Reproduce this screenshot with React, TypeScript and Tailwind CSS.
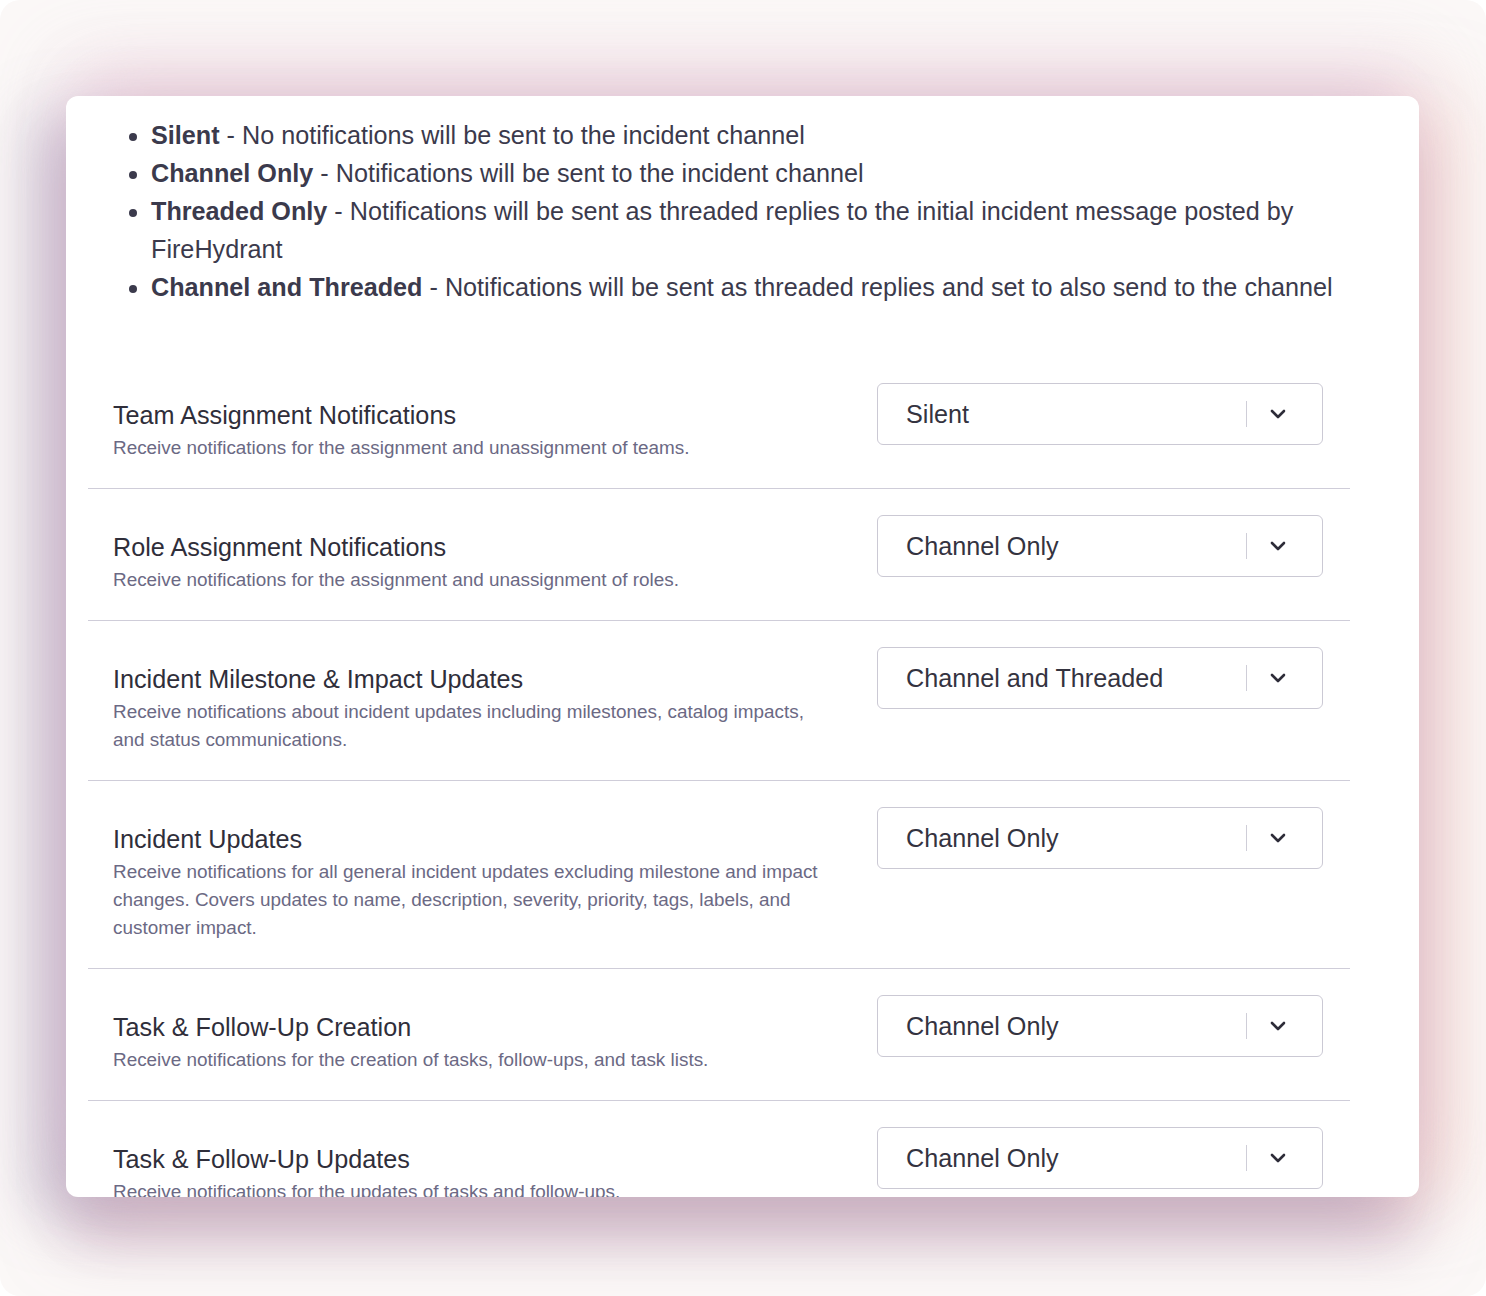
import { ChevronDown } from "lucide-react";

type Row = { title: string; desc: string; value: string };

const modes = [
  { name: "Silent", text: "No notifications will be sent to the incident channel" },
  { name: "Channel Only", text: "Notifications will be sent to the incident channel" },
  {
    name: "Threaded Only",
    text: "Notifications will be sent as threaded replies to the initial incident message posted by FireHydrant",
  },
  {
    name: "Channel and Threaded",
    text: "Notifications will be sent as threaded replies and set to also send to the channel",
  },
];

const rows: Row[] = [
  {
    title: "Team Assignment Notifications",
    desc: "Receive notifications for the assignment and unassignment of teams.",
    value: "Silent",
  },
  {
    title: "Role Assignment Notifications",
    desc: "Receive notifications for the assignment and unassignment of roles.",
    value: "Channel Only",
  },
  {
    title: "Incident Milestone & Impact Updates",
    desc: "Receive notifications about incident updates including milestones, catalog impacts, and status communications.",
    value: "Channel and Threaded",
  },
  {
    title: "Incident Updates",
    desc: "Receive notifications for all general incident updates excluding milestone and impact changes. Covers updates to name, description, severity, priority, tags, labels, and customer impact.",
    value: "Channel Only",
  },
  {
    title: "Task & Follow-Up Creation",
    desc: "Receive notifications for the creation of tasks, follow-ups, and task lists.",
    value: "Channel Only",
  },
  {
    title: "Task & Follow-Up Updates",
    desc: "Receive notifications for the updates of tasks and follow-ups.",
    value: "Channel Only",
  },
];

function Select({ value }: { value: string }) {
  return (
    <div className="ml-auto flex h-[62px] w-[446px] shrink-0 items-center rounded-[6px] border border-[#cbc9d4] bg-white pl-[28px] pr-[32px]">
      <span className="flex-1 pt-px text-[25.2px] text-[#34333f]">{value}</span>
      <span className="h-[26px] w-px bg-[#cfced8]" />
      <ChevronDown className="ml-[19px] text-[#2d2c38]" size={24} strokeWidth={2.6} />
    </div>
  );
}

function SettingRow({ row, first }: { row: Row; first: boolean }) {
  return (
    <div className={`flex items-start px-[25px] pb-[26px] pr-[27px] pt-[26px] ${first ? "" : "border-t border-[#cfcdd9]"}`}>
      <div className="w-[720px] pt-[16px]">
        <p className="text-[25.2px] leading-[32px] text-[#2f2e3a]">{row.title}</p>
        <p className="mt-[3px] text-[18.9px] leading-[28px] text-[#6b6984]">{row.desc}</p>
      </div>
      <Select value={row.value} />
    </div>
  );
}

export default function App() {
  return (
    <div className="h-[1296px] w-[1486px] overflow-hidden rounded-[20px] bg-[#fbf8f7] pt-[96px] font-['Liberation_Sans',Arial,sans-serif]">
      <div className="ml-[66px] h-[1101px] w-[1353px] overflow-hidden rounded-[12px] bg-white pl-[22px] pr-[69px] pt-[20px] shadow-[0_-30px_70px_rgba(225,186,214,0.45),-34px_16px_60px_rgba(150,140,175,0.42),34px_0_70px_rgba(245,200,186,0.5),0_44px_60px_rgba(190,150,176,0.55)]">
        <ul className="list-disc pl-[63px] text-[25.2px] leading-[38px] text-[#3b3a4c]">
          {modes.map((m) => (
            <li key={m.name}>
              <span className="font-bold">{m.name}</span> - {m.text}
            </li>
          ))}
        </ul>
        <div className="mt-[51px]">
          {rows.map((r, i) => (
            <SettingRow key={r.title} row={r} first={i === 0} />
          ))}
        </div>
      </div>
    </div>
  );
}
